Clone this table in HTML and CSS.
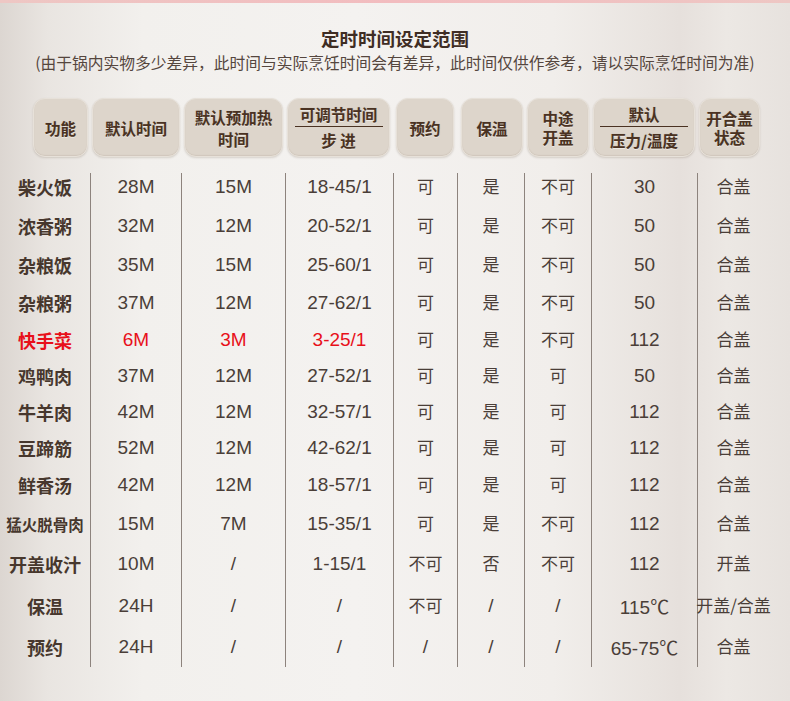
FILE: index.html
```html
<!DOCTYPE html>
<html lang="zh">
<head>
<meta charset="utf-8">
<link rel="stylesheet" href="styles.css">
</head>
<body>
<div class="page">
  <div class="strip"></div>
  <h1 class="title">定时时间设定范围</h1>
  <p class="sub">(由于锅内实物多少差异，此时间与实际烹饪时间会有差异，此时间仅供作参考，请以实际烹饪时间为准)</p>

  <div class="head">
    <div class="pill w1">功能</div>
    <div class="pill w2">默认时间</div>
    <div class="pill w3">默认预加热<br>时间</div>
    <div class="pill w4 split"><span>可调节时间</span><i class="rule"></i><span>步 进</span></div>
    <div class="pill w5">预约</div>
    <div class="pill w6">保温</div>
    <div class="pill w7 tight">中途<br>开盖</div>
    <div class="pill w8 split"><span>默认</span><i class="rule"></i><span>压力/温度</span></div>
    <div class="pill w9 tight">开合盖<br>状态</div>
  </div>

  <div class="grid">
    <div class="lab">柴火饭</div><div class="v">28M</div><div class="v">15M</div><div class="v">18-45/1</div><div class="v zh">可</div><div class="v zh">是</div><div class="v zh">不可</div><div class="v">30</div><div class="v zh">合盖</div>
    <div class="lab">浓香粥</div><div class="v">32M</div><div class="v">12M</div><div class="v">20-52/1</div><div class="v zh">可</div><div class="v zh">是</div><div class="v zh">不可</div><div class="v">50</div><div class="v zh">合盖</div>
    <div class="lab">杂粮饭</div><div class="v">35M</div><div class="v">15M</div><div class="v">25-60/1</div><div class="v zh">可</div><div class="v zh">是</div><div class="v zh">不可</div><div class="v">50</div><div class="v zh">合盖</div>
    <div class="lab">杂粮粥</div><div class="v">37M</div><div class="v">12M</div><div class="v">27-62/1</div><div class="v zh">可</div><div class="v zh">是</div><div class="v zh">不可</div><div class="v">50</div><div class="v zh">合盖</div>
    <div class="lab red">快手菜</div><div class="v red">6M</div><div class="v red">3M</div><div class="v red">3-25/1</div><div class="v zh">可</div><div class="v zh">是</div><div class="v zh">不可</div><div class="v">112</div><div class="v zh">合盖</div>
    <div class="lab">鸡鸭肉</div><div class="v">37M</div><div class="v">12M</div><div class="v">27-52/1</div><div class="v zh">可</div><div class="v zh">是</div><div class="v zh">可</div><div class="v">50</div><div class="v zh">合盖</div>
    <div class="lab">牛羊肉</div><div class="v">42M</div><div class="v">12M</div><div class="v">32-57/1</div><div class="v zh">可</div><div class="v zh">是</div><div class="v zh">可</div><div class="v">112</div><div class="v zh">合盖</div>
    <div class="lab">豆蹄筋</div><div class="v">52M</div><div class="v">12M</div><div class="v">42-62/1</div><div class="v zh">可</div><div class="v zh">是</div><div class="v zh">可</div><div class="v">112</div><div class="v zh">合盖</div>
    <div class="lab">鲜香汤</div><div class="v">42M</div><div class="v">12M</div><div class="v">18-57/1</div><div class="v zh">可</div><div class="v zh">是</div><div class="v zh">可</div><div class="v">112</div><div class="v zh">合盖</div>
    <div class="lab small">猛火脱骨肉</div><div class="v">15M</div><div class="v">7M</div><div class="v">15-35/1</div><div class="v zh">可</div><div class="v zh">是</div><div class="v zh">不可</div><div class="v">112</div><div class="v zh">合盖</div>
    <div class="lab">开盖收汁</div><div class="v">10M</div><div class="v">/</div><div class="v">1-15/1</div><div class="v zh">不可</div><div class="v zh">否</div><div class="v zh">不可</div><div class="v">112</div><div class="v zh">开盖</div>
    <div class="lab">保温</div><div class="v">24H</div><div class="v">/</div><div class="v">/</div><div class="v zh">不可</div><div class="v">/</div><div class="v">/</div><div class="v">115℃</div><div class="v zh">开盖/合盖</div>
    <div class="lab">预约</div><div class="v">24H</div><div class="v">/</div><div class="v">/</div><div class="v">/</div><div class="v">/</div><div class="v">/</div><div class="v">65-75℃</div><div class="v zh">合盖</div>
  </div>
</div>
</body>
</html>
```

FILE: styles.css
```css
* { box-sizing: border-box; }
html, body { margin: 0; padding: 0; }
body {
  width: 790px;
  height: 701px;
  overflow: hidden;
  font-family: "Liberation Sans", "Noto Sans CJK SC", sans-serif;
  color: #4a3c36;
  background: linear-gradient(to right,
    #dcd6d1 0%, #e9e5e1 6%, #f2f0ed 18%, #f4f2f0 45%, #f1eeeb 70%,
    #e9e4e0 82%, #e6e0dc 86%, #ece8e4 92%, #e7e2de 100%);
}
.page { width: 790px; height: 701px; }
.strip {
  height: 3px;
  background: linear-gradient(to right, #eec7c4, #f2bcbf 50%, #eec7c4);
}
.title {
  margin: 23px 0 0;
  text-align: center;
  font-family: "Noto Sans CJK SC", sans-serif;
  font-weight: 700;
  font-size: 18.5px;
  line-height: 24px;
  color: #3f2d24;
}
.sub {
  margin: 3px 0 0;
  text-align: center;
  font-family: "Noto Sans CJK SC", sans-serif;
  font-size: 15.75px;
  line-height: 20px;
  color: #55463e;
  white-space: nowrap;
}
.head {
  display: flex;
  gap: 4px;
  margin: 25px 0 0 33px;
  height: 59px;
}
.pill {
  display: flex;
  flex-direction: column;
  align-items: center;
  justify-content: center;
  height: 59px;
  border-radius: 12px;
  background: #ddd5cb;
  border: 1px solid #e7e1d9;
  box-shadow: 0 1px 2px rgba(90, 70, 50, 0.18), inset 0 -1px 1px rgba(120, 100, 80, 0.12);
  font-family: "Noto Sans CJK SC", sans-serif;
  font-weight: 700;
  font-size: 15.5px;
  line-height: 22px;
  color: #4a3222;
  text-align: center;
  text-shadow: 0 1px 0 rgba(255, 255, 255, 0.55), 0 0 1px rgba(60, 40, 20, 0.25);
}
.pill.tight { line-height: 19px; font-size: 15.5px; }
.pill.split span { line-height: 19px; }
.pill .rule {
  display: block;
  width: 88px;
  height: 1px;
  margin: 2px 0 4px;
  background: #4a3222;
}
.w1 { width: 55px; }
.w2 { width: 88px; }
.w3 { width: 99px; }
.w4 { width: 103px; }
.w5 { width: 58px; margin-left: 2px; }
.w6 { width: 62px; margin-left: 3px; }
.w7 { width: 62px; }
.w8 { width: 102px; }
.w9 { width: 61px; }

.grid {
  display: grid;
  margin-top: 16px;
  grid-template-columns: 90px 91px 104px 108px 64px 67px 67px 106px 72px;
  grid-template-rows: 33px 40px 38px 37px 37px 36px 35px 37px 38px 39px 42px 41px 41px;
}
.grid > div {
  display: flex;
  align-items: center;
  justify-content: center;
  white-space: nowrap;
}
.grid > :nth-child(-n+9) { padding-bottom: 6px; }
.v {
  border-left: 1px solid #8d837d;
  font-size: 19px;
  color: #4a3e38;
}
.v.zh {
  font-family: "Noto Sans CJK SC", sans-serif;
  font-size: 17px;
  padding-bottom: 3px;
}
.grid > .zh:nth-child(-n+9) { padding-bottom: 9px; }
.lab {
  font-family: "Noto Sans CJK SC", sans-serif;
  font-weight: 700;
  font-size: 18px;
  color: #47372d;
}
.lab.small { font-size: 15.5px; }
.red { color: #e8101a; }
.lab.red { color: #e8101a; }
```
